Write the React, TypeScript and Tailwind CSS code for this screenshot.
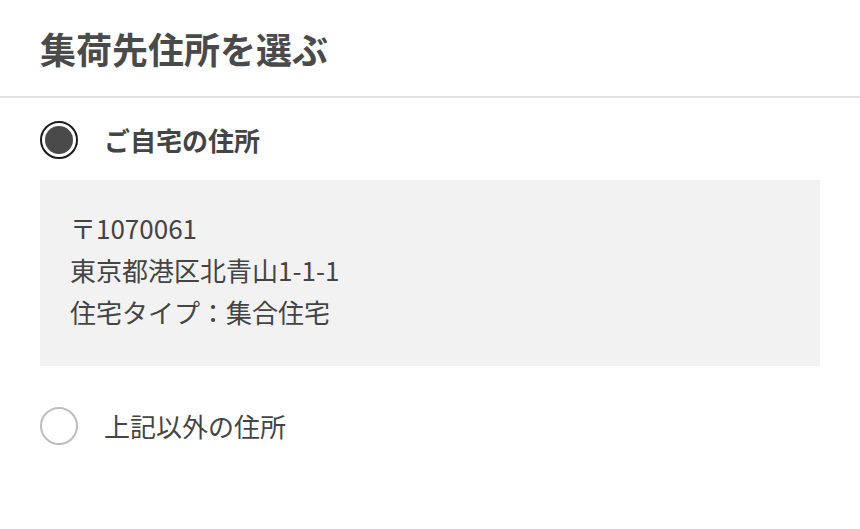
const font = { fontFamily: '"Noto Sans CJK JP", "Noto Sans", sans-serif' }

function Radio({ checked }: { checked: boolean }) {
  if (checked) {
    return (
      <span className="flex h-[38px] w-[38px] shrink-0 items-center justify-center rounded-full border-2 border-[#1a1a1a] bg-white">
        <span className="h-[28px] w-[28px] rounded-full bg-[#4a4a4a]" />
      </span>
    )
  }
  return <span className="h-[38px] w-[38px] shrink-0 rounded-full border-2 border-[#bdbdbd] bg-white" />
}

export default function App() {
  return (
    <div className="min-h-[529px] w-[860px] bg-white text-[#444]" style={font}>
      <header className="flex h-[98px] items-center border-b-2 border-[#e2e2e2] px-10">
        <h1 className="text-[36px] font-bold leading-none text-[#4a4a4a]">集荷先住所を選ぶ</h1>
      </header>

      <div className="px-10 pt-[23px]">
        <label className="flex items-center gap-[26px]">
          <Radio checked />
          <span className="text-[26px] font-bold leading-none">ご自宅の住所</span>
        </label>

        <div className="mt-[21px] bg-[#f2f2f2] px-[30px] pb-[33px] pt-[27px] text-[26px] leading-[42px]">
          <p>〒1070061</p>
          <p>東京都港区北青山1-1-1</p>
          <p>住宅タイプ：集合住宅</p>
        </div>

        <label className="mt-[41px] flex items-center gap-[26px]">
          <Radio checked={false} />
          <span className="text-[26px] leading-none">上記以外の住所</span>
        </label>
      </div>
    </div>
  )
}
